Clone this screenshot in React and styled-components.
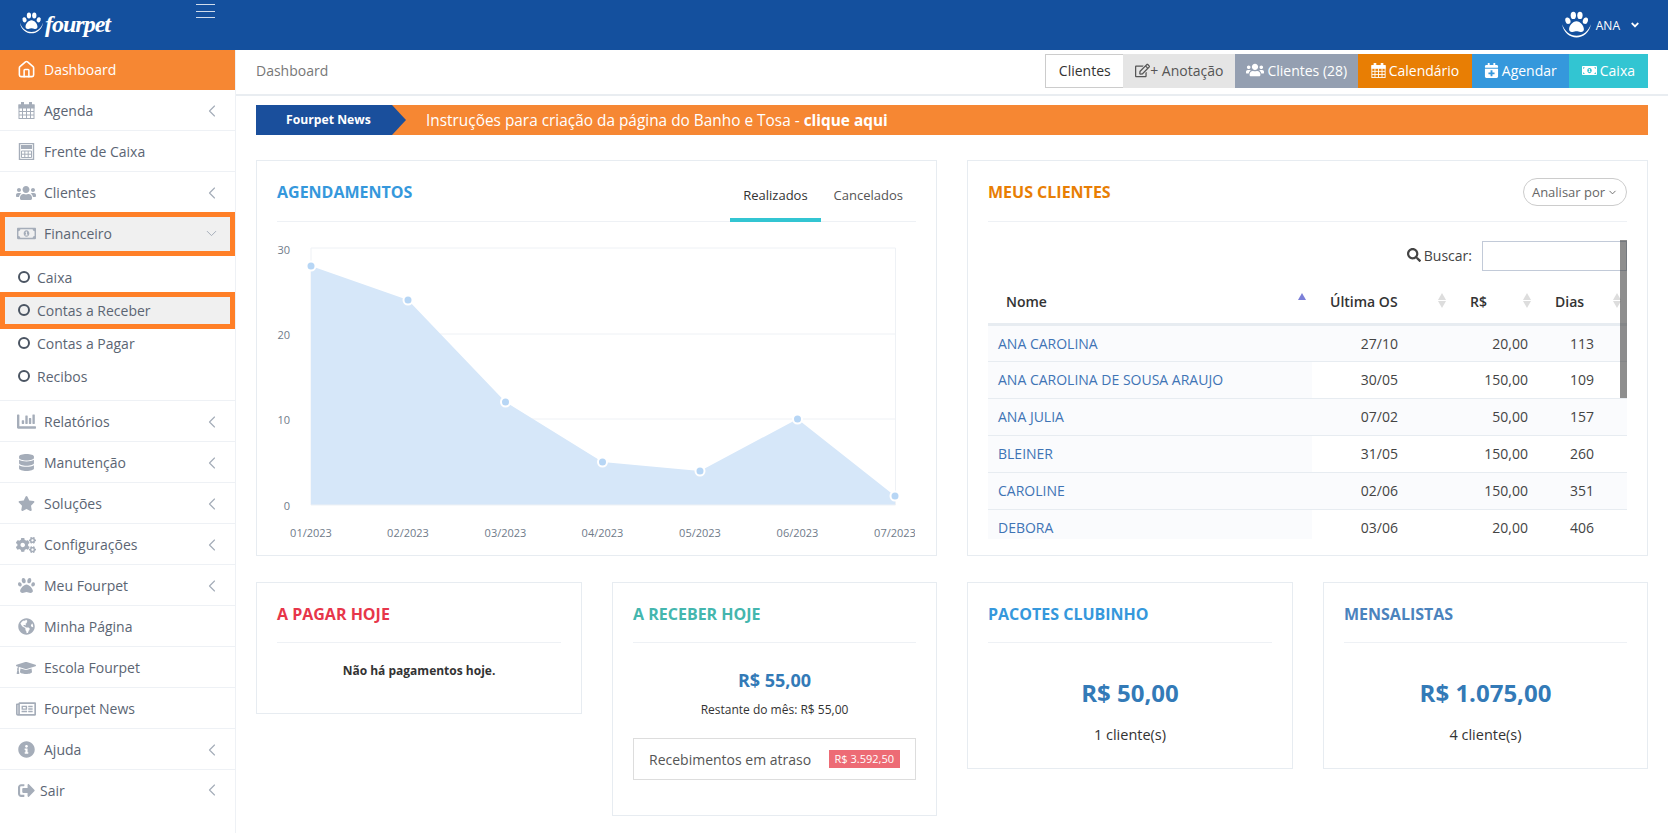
import React from 'react';
import styled, { createGlobalStyle } from 'styled-components';
import {
    FaAngleDown, FaCalendarPlus, FaChartBar, FaCogs, FaDatabase,
    FaGlobeAmericas, FaGraduationCap, FaInfoCircle, FaMoneyBillAlt, FaPaw, FaRegEdit, FaRegMoneyBillAlt,
    FaRegNewspaper, FaSearch, FaSignOutAlt, FaStar, FaUsers,
} from 'react-icons/fa';
import { ChevronDown, ChevronLeft, House } from 'lucide-react';

const CalendarIcon = ({ size = 17 }) => (
    <svg width={size} height={size} viewBox="0 0 17 17" fill="none" stroke="currentColor">
        <rect x="1" y="3" width="15" height="13.500" />
        <rect x="1" y="3" width="15" height="3" fill="currentColor" />
        <path d="M4.500 6v10M8.500 6v10M12.500 6v10M1 9.500h15M1 13h15" />
        <rect x="3.500" y="0.500" width="2" height="4" fill="currentColor" />
        <rect x="11.500" y="0.500" width="2" height="4" fill="currentColor" />
    </svg>
);

const CalcIcon = ({ size = 17 }) => (
    <svg width={size} height={size} viewBox="0 0 17 17" fill="none" stroke="currentColor">
        <rect x="1.500" y="0.500" width="14" height="16" strokeWidth="1.400" />
        <rect x="3.500" y="2.500" width="10" height="3" fill="currentColor" />
        <path d="M3.500 8h10v6.500h-10zM6.800 8v6.500M10.200 8v6.500M3.500 11.200h10" />
    </svg>
);

const menuTop = [
    { label: 'Agenda', icon: <CalendarIcon />, arrow: true },
    { label: 'Frente de Caixa', icon: <CalcIcon /> },
    { label: 'Clientes', icon: <FaUsers />, size: 20, arrow: true },
];

const subMenu = ['Caixa', 'Contas a Receber', 'Contas a Pagar', 'Recibos'];

const menuBottom = [
    { label: 'Relatórios', icon: <FaChartBar />, size: 19, arrow: true },
    { label: 'Manutenção', icon: <FaDatabase />, arrow: true },
    { label: 'Soluções', icon: <FaStar />, arrow: true },
    { label: 'Configurações', icon: <FaCogs />, size: 20, arrow: true },
    { label: 'Meu Fourpet', icon: <FaPaw />, arrow: true },
    { label: 'Minha Página', icon: <FaGlobeAmericas /> },
    { label: 'Escola Fourpet', icon: <FaGraduationCap />, size: 22 },
    { label: 'Fourpet News', icon: <FaRegNewspaper />, size: 20 },
    { label: 'Ajuda', icon: <FaInfoCircle />, arrow: true },
    { label: 'Sair', icon: <FaSignOutAlt />, arrow: true, tight: true },
];

const clients = [
    ['ANA CAROLINA', '27/10', '20,00', '113'],
    ['ANA CAROLINA DE SOUSA ARAUJO', '30/05', '150,00', '109'],
    ['ANA JULIA', '07/02', '50,00', '157'],
    ['BLEINER', '31/05', '150,00', '260'],
    ['CAROLINE', '02/06', '150,00', '351'],
    ['DEBORA', '03/06', '20,00', '406'],
];

const chartPoints = [
    { x: 311, y: 266, label: '01/2023' },
    { x: 408, y: 300, label: '02/2023' },
    { x: 505.5, y: 402, label: '03/2023' },
    { x: 602.5, y: 462, label: '04/2023' },
    { x: 700, y: 471, label: '05/2023' },
    { x: 797.5, y: 419, label: '06/2023' },
    { x: 895, y: 496, label: '07/2023' },
];

const PawMark = ({ size = 24 }) => (
    <svg width={size} height={size * 0.89} viewBox="0 -1 28 25" fill="#fff">
        <g transform="translate(14 9) scale(1.2) translate(-14 -9)">
            <ellipse cx="7.5" cy="8" rx="1.9" ry="2.5" transform="rotate(-18 7.5 8)" />
            <ellipse cx="11.6" cy="4" rx="2" ry="2.8" />
            <ellipse cx="16.6" cy="4" rx="2" ry="2.8" />
            <ellipse cx="20.7" cy="8" rx="1.9" ry="2.5" transform="rotate(18 20.7 8)" />
            <path d="M14 8.500c3 0 5.600 3.600 5.600 6 0 1.800-1.400 2.200-2.600 2-1.200-.2-2-.6-3-.6s-1.800.4-3 .6c-1.200.2-2.600-.2-2.600-2 0-2.400 2.600-6 5.600-6z" />
        </g>
        <path d="M1 11C2 18.500 8 23 14 23S26 18.500 27 11C24.800 17.600 19.600 21.400 14 21.400S3.200 17.600 1 11z" />
    </svg>
);

const AreaChart = () => {
    const line = chartPoints.map((p) => `${p.x},${p.y}`).join(' ');
    return (
        <ChartSvg viewBox="277 222 638 330">
            {[248, 334, 419].map((y) => (
                <line key={y} x1="311" x2="895.500" y1={y} y2={y} stroke="#eef1f5" />
            ))}
            <line x1="895.500" x2="895.500" y1="248" y2="505" stroke="#eef1f5" />
            <line x1="311" x2="311" y1="248" y2="505" stroke="#eef1f5" />
            <polygon points={`311,505 ${line} 895,505`} fill="#d6e7f9" />
            <line x1="311" x2="895.500" y1="505" y2="505" stroke="#eef1f5" />
            {[['30', 254], ['20', 339], ['10', 424], ['0', 510]].map(([t, y]) => (
                <text key={t} x="290" y={y} textAnchor="end" fontSize="11" fill="#6f7b8a">{t}</text>
            ))}
            {chartPoints.map((p) => (
                <g key={p.label}>
                    <circle cx={p.x} cy={p.y} r="4.500" fill="#b7d6f5" stroke="#fff" strokeWidth="2" />
                    <text x={p.x} y="537" textAnchor="middle" fontSize="11" fill="#6f7b8a">{p.label}</text>
                </g>
            ))}
        </ChartSvg>
    );
};

const MenuRow = ({ item }) => (
    <Item>
        <ItemIcon $size={item.size}>{item.icon}</ItemIcon>
        <ItemLabel $tight={item.tight}>{item.label}</ItemLabel>
        {item.arrow && <Arrow><ChevronLeft size={20} strokeWidth={1.4} /></Arrow>}
    </Item>
);

const App = () => {
    return (
        <>
            <GlobalStyle />
            <TopBar>
                <Logo>
                    <PawMark size={25} />
                    <LogoText>fourpet</LogoText>
                </Logo>
                <Burger><span /><span /><span /></Burger>
                <UserMenu>
                    <PawMark size={31} />
                    <span>ANA</span>
                    <FaAngleDown />
                </UserMenu>
            </TopBar>
            <Shell>
                <Sidebar>
                    <ActiveItem>
                        <ItemIcon><House size={19} strokeWidth={2} /></ItemIcon>
                        <ItemLabel>Dashboard</ItemLabel>
                    </ActiveItem>
                    {menuTop.map((item) => <MenuRow key={item.label} item={item} />)}
                    <OpenItem>
                        <ItemIcon $size={19}><FaRegMoneyBillAlt /></ItemIcon>
                        <ItemLabel>Financeiro</ItemLabel>
                        <Arrow><ChevronDown size={17} strokeWidth={1.4} /></Arrow>
                    </OpenItem>
                    <SubList>
                        {subMenu.map((label) => (
                            <SubItem key={label} $marked={label === 'Contas a Receber'}>
                                <Ring />
                                {label}
                            </SubItem>
                        ))}
                    </SubList>
                    {menuBottom.map((item) => <MenuRow key={item.label} item={item} />)}
                </Sidebar>
                <Main>
                    <PageBar>
                        <Crumb>Dashboard</Crumb>
                        <Actions>
                            <ActionOutline $pad={12.5}>Clientes</ActionOutline>
                            <Action $bg="#e5e5e5" $color="#555" $gap={0} $pad={12}><FaRegEdit />+ Anotação</Action>
                            <Action $bg="#949fb1" $pad={11}><FaUsers size={18} />Clientes (28)</Action>
                            <Action $bg="#e87e04" $pad={12.5}><CalendarIcon size={15} />Calendário</Action>
                            <Action $bg="#3598dc" $pad={12}><FaCalendarPlus />Agendar</Action>
                            <Action $bg="#32c5d2"><FaMoneyBillAlt />Caixa</Action>
                        </Actions>
                    </PageBar>
                    <Content>
                        <News>
                            <NewsTag>Fourpet News</NewsTag>
                            <NewsText>Instruções para criação da página do Banho e Tosa - <b>clique aqui</b></NewsText>
                        </News>
                        <TwoCols>
                            <Card>
                                <CardHead $tall>
                                    <CardTitle $color="#3598dc">Agendamentos</CardTitle>
                                    <Tabs>
                                        <Tab $active>Realizados</Tab>
                                        <Tab>Cancelados</Tab>
                                    </Tabs>
                                </CardHead>
                                <AreaChart />
                            </Card>
                            <Card>
                                <CardHead $tall>
                                    <CardTitle $color="#e87e04">Meus Clientes</CardTitle>
                                    <PillButton>Analisar por <ChevronDown size={11} /></PillButton>
                                </CardHead>
                                <ClientsBody>
                                    <SearchRow>
                                        <SearchLabel><FaSearch /> Buscar:</SearchLabel>
                                        <SearchInput />
                                    </SearchRow>
                                    <TableClip>
                                        <Table>
                                            <colgroup>
                                                <col style={{ width: 324 }} />
                                                <col style={{ width: 140 }} />
                                                <col style={{ width: 85 }} />
                                                <col style={{ width: 90 }} />
                                            </colgroup>
                                            <thead>
                                                <tr>
                                                    <Th>Nome<SortUp $on /></Th>
                                                    <Th>Última OS<SortUp /><SortDown /></Th>
                                                    <Th>R$<SortUp /><SortDown /></Th>
                                                    <Th>Dias<SortUp /><SortDown /></Th>
                                                </tr>
                                            </thead>
                                            <tbody>
                                                {clients.map((c) => (
                                                    <Row key={c[0]}>
                                                        <NameCell>{c[0]}</NameCell>
                                                        <Td $pad={54}>{c[1]}</Td>
                                                        <Td $pad={9}>{c[2]}</Td>
                                                        <Td $pad={33}>{c[3]}</Td>
                                                    </Row>
                                                ))}
                                            </tbody>
                                        </Table>
                                    </TableClip>
                                    <ScrollThumb />
                                </ClientsBody>
                            </Card>
                            <PairRow>
                                <Card>
                                    <CardHead>
                                        <CardTitle $color="#e7364a">A pagar hoje</CardTitle>
                                    </CardHead>
                                    <EmptyNote>Não há pagamentos hoje.</EmptyNote>
                                </Card>
                                <Card>
                                    <CardHead>
                                        <CardTitle $color="#44b6ae">A receber hoje</CardTitle>
                                    </CardHead>
                                    <TodayValue>R$ 55,00</TodayValue>
                                    <MonthNote>Restante do mês: R$ 55,00</MonthNote>
                                    <LateBox>
                                        Recebimentos em atraso
                                        <Badge>R$ 3.592,50</Badge>
                                    </LateBox>
                                </Card>
                            </PairRow>
                            <PairRow>
                                <Card>
                                    <CardHead>
                                        <CardTitle $color="#3598dc">Pacotes Clubinho</CardTitle>
                                    </CardHead>
                                    <BigValue>R$ 50,00</BigValue>
                                    <BigNote>1 cliente(s)</BigNote>
                                </Card>
                                <Card>
                                    <CardHead>
                                        <CardTitle $color="#4b83bd">Mensalistas</CardTitle>
                                    </CardHead>
                                    <BigValue>R$ 1.075,00</BigValue>
                                    <BigNote>4 cliente(s)</BigNote>
                                </Card>
                            </PairRow>
                        </TwoCols>
                    </Content>
                </Main>
            </Shell>
        </>
    );
};

const GlobalStyle = createGlobalStyle`
    html, body {
        margin: 0;
        height: 100%;
        overflow: hidden;
        background: #fff;
        font-family: 'Open Sans', sans-serif;
        font-size: 14px;
        color: #333;
    }
    * {
        box-sizing: border-box;
    }
`;

const TopBar = styled.header`
    height: 50px;
    background: #14509e;
    display: flex;
    color: #fff;
`;

const Logo = styled.div`
    width: 196px;
    padding: 12px 0 0 19px;
    display: flex;
    align-items: flex-start;
    gap: 1px;
`;

const LogoText = styled.span`
    font-family: 'Liberation Serif', serif;
    font-style: italic;
    font-weight: 700;
    font-size: 24px;
    line-height: 24px;
    letter-spacing: -1px;
`;

const Burger = styled.div`
    width: 19px;
    padding-top: 4px;
    display: flex;
    flex-direction: column;
    gap: 5.5px;

    span {
        display: block;
        height: 1px;
        background: rgba(255, 255, 255, 0.8);
    }
`;

const UserMenu = styled.div`
    margin-left: auto;
    padding-right: 27px;
    display: flex;
    align-items: center;
    gap: 4px;
    font-size: 12px;

    svg:last-child {
        margin-left: 5px;
        font-size: 12px;
    }
`;

const Shell = styled.div`
    display: flex;
    height: 783px;
`;

const Sidebar = styled.nav`
    width: 236px;
    flex: none;
    border-right: 1px solid #eef1f5;
`;

const Item = styled.div`
    height: 41px;
    padding: 1px 13px 0 16px;
    display: flex;
    align-items: center;
    color: #5b6573;
    border-bottom: 1px solid #eef1f5;

    &:last-child {
        padding: 0 13px 1px 16px;
        border-bottom: 0;
    }
`;

const ActiveItem = styled(Item)`
    height: 40px;
    padding-top: 0;
    padding-bottom: 1px;
    background: #f68733;
    color: #fff;
    border-bottom: 0;
`;

const OpenItem = styled(Item)`
    height: 44px;
    margin: -1px 0 -3px;
    padding: 0 10px 1px 11px;
    background: #f0f0f0;
    border: 5px solid #ff7f27;
    position: relative;
`;

const ItemIcon = styled.span`
    width: 20px;
    display: flex;
    justify-content: center;
    font-size: ${(props) => props.$size || 17}px;
    color: inherit;

    ${Item}:not(${ActiveItem}) & {
        color: #a5adb9;
    }
`;

const ItemLabel = styled.span`
    margin-left: ${(props) => (props.$tight ? '4px' : '8px')};
`;

const Arrow = styled.span`
    margin-left: auto;
    display: flex;
    color: #a5adb9;
`;

const SubList = styled.div`
    padding: 7.5px 0 7.5px;
    border-bottom: 1px solid #eef1f5;
`;

const SubItem = styled.div`
    height: ${(props) => (props.$marked ? '37px' : '33px')};
    margin: ${(props) => (props.$marked ? '-2px 0' : '0')};
    padding-left: ${(props) => (props.$marked ? '13px' : '18px')};
    display: flex;
    align-items: center;
    gap: 7px;
    color: #5b6573;
    background: ${(props) => (props.$marked ? '#f0f0f0' : 'transparent')};
    border: ${(props) => (props.$marked ? '5px solid #ff7f27' : '0')};
    position: relative;
`;

const Ring = styled.span`
    width: 12px;
    height: 12px;
    border: 2px solid #4a5462;
    border-radius: 50%;
`;

const Main = styled.main`
    flex: 1;
    min-width: 0;
`;

const PageBar = styled.div`
    height: 46px;
    padding: 4px 20px 0;
    display: flex;
    justify-content: space-between;
    border-bottom: 2px solid #e9edf1;
`;

const Crumb = styled.div`
    padding-top: 7px;
    color: #777;
`;

const Actions = styled.div`
    display: flex;
    height: 34px;
`;

const Action = styled.div`
    display: flex;
    align-items: center;
    gap: ${(props) => (props.$gap === undefined ? 3 : props.$gap)}px;
    padding: 0 ${(props) => props.$pad || 13}px 2px;
    background: ${(props) => props.$bg};
    color: ${(props) => props.$color || '#fff'};

    svg {
        font-size: 15px;
    }
`;

const ActionOutline = styled(Action)`
    background: #fff;
    color: #333;
    border: 1px solid #ccc;
    border-right: 0;
`;

const Content = styled.div`
    padding: 9px 20px 0 20px;
`;

const News = styled.div`
    height: 30px;
    background: #f68733;
    display: flex;
    align-items: center;
    color: #fff;
`;

const NewsTag = styled.div`
    position: relative;
    width: 136px;
    height: 30px;
    padding-left: 30px;
    background: #1a4f9c;
    font-size: 12.2px;
    font-weight: 700;
    line-height: 29px;

    &:after {
        content: '';
        position: absolute;
        left: 136px;
        top: 0;
        border-left: 14px solid #1a4f9c;
        border-top: 15px solid transparent;
        border-bottom: 15px solid transparent;
    }
`;

const NewsText = styled.div`
    margin-left: 34px;
    font-size: 15.4px;

    b {
        font-weight: 700;
    }
`;

const TwoCols = styled.div`
    margin-top: 25px;
    display: grid;
    grid-template-columns: 681px 681px;
    column-gap: 30px;
    row-gap: 26px;
    align-items: start;
`;

const PairRow = styled.div`
    display: grid;
    grid-template-columns: 326px 325px;
    column-gap: 30px;
    align-items: start;
`;

const Card = styled.section`
    background: #fff;
    border: 1px solid #e7ecf1;
    padding: 0 20px;
`;

const CardHead = styled.div`
    height: ${(props) => (props.$tall ? '61px' : '60px')};
    padding-top: ${(props) => (props.$tall ? '2px' : '3px')};
    border-bottom: 1px solid #eef1f5;
    display: flex;
    align-items: center;
    justify-content: space-between;
`;

const CardTitle = styled.h3`
    margin: 0;
    font-size: 16px;
    font-weight: 700;
    text-transform: uppercase;
    color: ${(props) => props.$color};
`;

const Tabs = styled.div`
    display: flex;
    align-self: stretch;
`;

const Tab = styled.div`
    margin-bottom: -1px;
    padding: 23px 13px 0;
    font-size: 13px;
    color: ${(props) => (props.$active ? '#333' : '#555')};
    border-bottom: 4px solid ${(props) => (props.$active ? '#32c5d2' : 'transparent')};
`;

const ChartSvg = styled.svg`
    display: block;
    width: 638px;
    height: 330px;
    margin-bottom: 3px;
    font-family: 'Open Sans', sans-serif;
`;

const PillButton = styled.div`
    width: 104px;
    height: 28px;
    border: 1px solid #ccc;
    border-radius: 14px;
    display: flex;
    align-items: center;
    justify-content: center;
    gap: 2px;
    font-size: 13px;
    color: #666;
`;

const ClientsBody = styled.div`
    position: relative;
    height: 333px;
`;

const SearchRow = styled.div`
    height: 58px;
    padding-top: 19px;
    display: flex;
    justify-content: flex-end;
    gap: 10px;
`;

const SearchLabel = styled.label`
    display: flex;
    align-items: center;
    gap: 3px;
    height: 28px;
    color: #444;
`;

const SearchInput = styled.div`
    width: 145px;
    height: 30px;
    border: 1px solid #c2cad8;
`;

const ScrollThumb = styled.div`
    position: absolute;
    top: 18px;
    right: 0;
    width: 7px;
    height: 158px;
    background: rgba(60, 60, 60, 0.58);
`;

const TableClip = styled.div`
    height: 259px;
    overflow: hidden;
`;

const Table = styled.table`
    width: 639px;
    table-layout: fixed;
    border-collapse: collapse;
    font-size: 14px;
`;

const Th = styled.th`
    position: relative;
    height: 44px;
    padding: 0 0 0 18px;
    text-align: left;
    font-weight: 600;
    color: #333;
    border-bottom: 3px solid #e7ecf1;
`;

const SortUp = styled.i`
    position: absolute;
    right: 6px;
    top: 13px;
    border-left: 4px solid transparent;
    border-right: 4px solid transparent;
    border-bottom: 7px solid ${(props) => (props.$on ? '#7b7fd8' : '#ddd')};
`;

const SortDown = styled.i`
    position: absolute;
    right: 6px;
    top: 21px;
    border-left: 4px solid transparent;
    border-right: 4px solid transparent;
    border-top: 7px solid #ddd;
`;

const Row = styled.tr`
    height: 37px;
    border-bottom: 1px solid #e7ecf1;

    &:nth-child(odd) {
        background: #fafbfd;
    }
`;

const NameCell = styled.td`
    padding-left: 10px;
    background: #fafbfd;
    color: #3f74b5;
    white-space: nowrap;
`;

const Td = styled.td`
    text-align: right;
    padding-right: ${(props) => props.$pad}px;
    color: #444;
`;

const EmptyNote = styled.p`
    margin: 19px 0 0;
    height: 51px;
    text-align: center;
    font-size: 12px;
    font-weight: 700;
`;

const TodayValue = styled.div`
    margin-top: 25px;
    text-align: center;
    font-size: 18px;
    font-weight: 700;
    line-height: 24px;
    color: #337ab7;
`;

const MonthNote = styled.div`
    margin-top: 7px;
    text-align: center;
    font-size: 12px;
    line-height: 22px;
`;

const LateBox = styled.div`
    margin: 17px 0 35px;
    height: 42px;
    padding: 0 15px;
    border: 1px solid #ddd;
    display: flex;
    align-items: center;
    justify-content: space-between;
    color: #555;
`;

const Badge = styled.span`
    padding: 0 6px;
    height: 18px;
    background: #ed6b75;
    color: #fff;
    font-size: 11px;
    line-height: 18px;
`;

const BigValue = styled.div`
    margin-top: 34px;
    text-align: center;
    font-size: 24px;
    font-weight: 700;
    line-height: 32px;
    color: #337ab7;
`;

const BigNote = styled.div`
    margin: 14px 0 21px;
    text-align: center;
    font-size: 14.5px;
    line-height: 24px;
`;

export default App;
